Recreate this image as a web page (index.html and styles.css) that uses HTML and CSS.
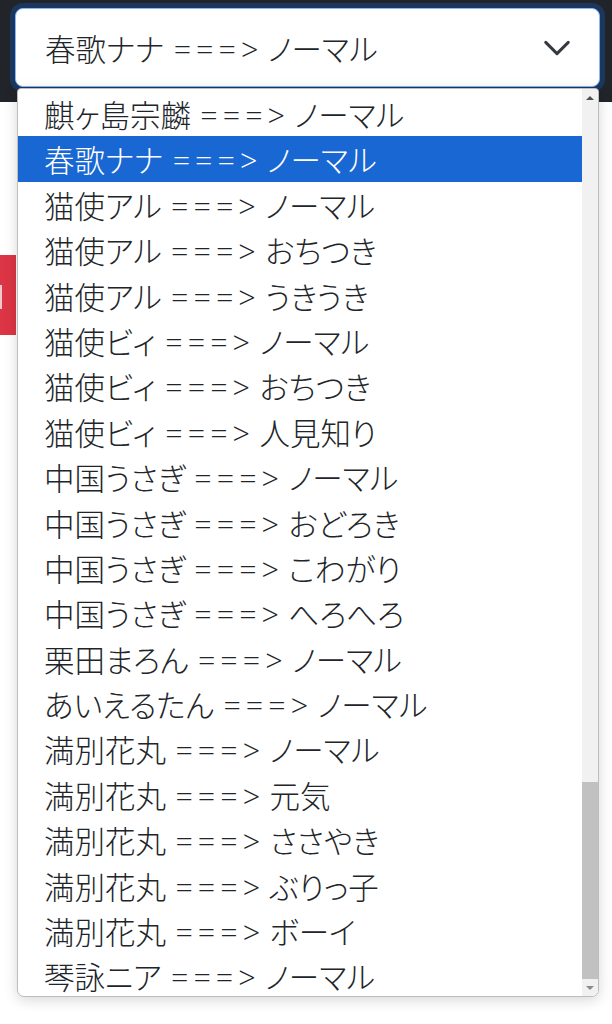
FILE: index.html
```html
<!DOCTYPE html>
<html lang="ja">
<head>
<meta charset="utf-8">
<title>select</title>
<link rel="stylesheet" href="styles.css">
</head>
<body>
<header class="topbar">
  <div class="select">
    <span class="select-text">春歌ナナ <span class="arrow">===&gt;</span> ノーマル</span>
    <svg class="chevron" viewBox="0 0 16 16" width="30" height="30" aria-hidden="true"><path d="M2 5l6 6 6-6" fill="none" stroke="#343a40" stroke-width="1.6" stroke-linecap="round" stroke-linejoin="round"/></svg>
  </div>
</header>
<main class="content">
  <div class="danger-btn"><span class="danger-mark"></span></div>
</main>
<div class="dropdown">
  <ul class="options">
    <li class="option">麒ヶ島宗麟 <span class="arrow">===&gt;</span> ノーマル</li>
    <li class="option selected">春歌ナナ <span class="arrow">===&gt;</span> ノーマル</li>
    <li class="option">猫使アル <span class="arrow">===&gt;</span> ノーマル</li>
    <li class="option">猫使アル <span class="arrow">===&gt;</span> おちつき</li>
    <li class="option">猫使アル <span class="arrow">===&gt;</span> うきうき</li>
    <li class="option">猫使ビィ <span class="arrow">===&gt;</span> ノーマル</li>
    <li class="option">猫使ビィ <span class="arrow">===&gt;</span> おちつき</li>
    <li class="option">猫使ビィ <span class="arrow">===&gt;</span> 人見知り</li>
    <li class="option">中国うさぎ <span class="arrow">===&gt;</span> ノーマル</li>
    <li class="option">中国うさぎ <span class="arrow">===&gt;</span> おどろき</li>
    <li class="option">中国うさぎ <span class="arrow">===&gt;</span> こわがり</li>
    <li class="option">中国うさぎ <span class="arrow">===&gt;</span> へろへろ</li>
    <li class="option">栗田まろん <span class="arrow">===&gt;</span> ノーマル</li>
    <li class="option">あいえるたん <span class="arrow">===&gt;</span> ノーマル</li>
    <li class="option">満別花丸 <span class="arrow">===&gt;</span> ノーマル</li>
    <li class="option">満別花丸 <span class="arrow">===&gt;</span> 元気</li>
    <li class="option">満別花丸 <span class="arrow">===&gt;</span> ささやき</li>
    <li class="option">満別花丸 <span class="arrow">===&gt;</span> ぶりっ子</li>
    <li class="option">満別花丸 <span class="arrow">===&gt;</span> ボーイ</li>
    <li class="option">琴詠ニア <span class="arrow">===&gt;</span> ノーマル</li>
  </ul>
  <div class="scrollbar">
    <div class="sb-btn"><span class="arrow-up"></span></div>
    <div class="sb-track"></div>
    <div class="sb-thumb"></div>
    <div class="sb-btn"><span class="arrow-down"></span></div>
  </div>
</div>
</body>
</html>
```

FILE: styles.css
```css
* { box-sizing: border-box; }

html, body {
  margin: 0;
  padding: 0;
}

body {
  width: 612px;
  height: 1024px;
  overflow: hidden;
  background: #ffffff;
  font-family: "Roboto", "Noto Sans CJK JP", sans-serif;
  font-feature-settings: "palt" 1;
  color: #212529;
  position: relative;
}

.topbar {
  background: #212529;
  padding: 8px 12px 15px 15px;
}

.select {
  height: 79px;
  background: #ffffff;
  border: 1px solid #86b7fe;
  border-radius: 8px;
  box-shadow: 0 0 0 5px #1c375e;
  display: flex;
  align-items: center;
  justify-content: space-between;
  padding: 0 27px 0 29px;
}

.select-text {
  font-size: 30.5px;
  color: #212529;
  white-space: nowrap;
  font-weight: 300;
  word-spacing: 2px;
}

.arrow {
  font-family: "Open Sans", "Liberation Sans", sans-serif;
  font-weight: 300;
  letter-spacing: 5px;
  margin-right: -5px;
}

.chevron {
  display: block;
}

.content {
  padding-top: 153px;
}

.danger-btn {
  width: 16px;
  height: 80px;
  background: #dc3545;
  position: relative;
}

.danger-mark {
  position: absolute;
  left: 0;
  top: 30px;
  width: 2px;
  height: 24px;
  background: #f4c9ce;
}

.dropdown {
  position: absolute;
  left: 17px;
  top: 88px;
  width: 582px;
  height: 909px;
  background: #ffffff;
  border: 1px solid #bdbdbd;
  border-radius: 4px 4px 7px 7px;
  box-shadow: 0 3px 14px rgba(0, 0, 0, 0.16);
  display: flex;
  overflow: hidden;
}

.options {
  list-style: none;
  margin: 0;
  padding: 2px 0 0 0;
  flex: 1;
  overflow: hidden;
}

.option {
  height: 45.4px;
  line-height: 41.4px;
  padding: 4px 0 0 26px;
  font-size: 30.5px;
  font-weight: 300;
  word-spacing: 2px;
  color: #212529;
  white-space: nowrap;
}

.option.selected {
  background: #1967d2;
  color: #ffffff;
}

.scrollbar {
  width: 16px;
  display: flex;
  flex-direction: column;
  background: #f1f1f1;
}

.sb-btn {
  height: 17px;
  display: flex;
  align-items: center;
  justify-content: center;
}

.sb-track {
  flex: 1;
}

.sb-thumb {
  height: 197px;
  background: #c1c1c1;
}

.arrow-up {
  width: 0;
  height: 0;
  border-left: 4px solid transparent;
  border-right: 4px solid transparent;
  border-bottom: 4px solid #505050;
}

.arrow-down {
  width: 0;
  height: 0;
  border-left: 4px solid transparent;
  border-right: 4px solid transparent;
  border-top: 4px solid #8a8a8a;
}
```
